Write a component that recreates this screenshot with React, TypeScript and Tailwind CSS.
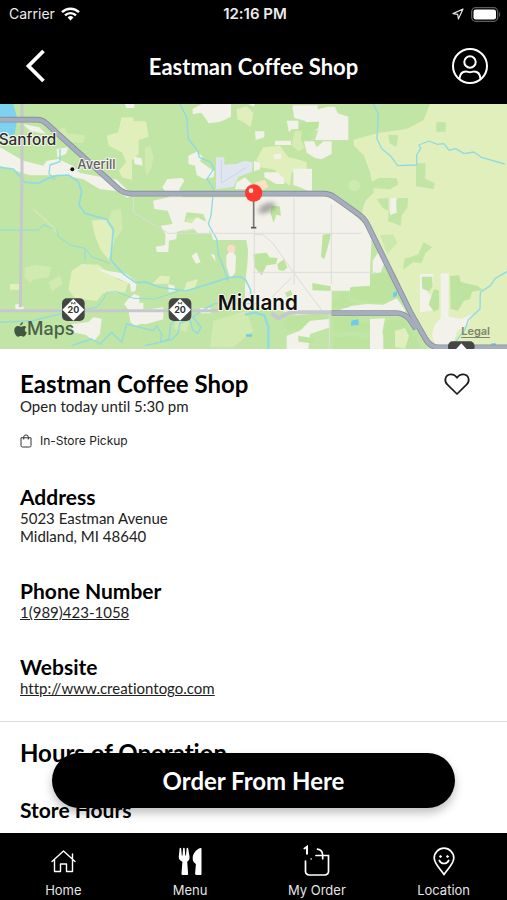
import type { ReactNode } from 'react';

const NAV_ITEMS: { label: string; icon: ReactNode }[] = [
  { label: 'Home', icon: <HomeIcon /> },
  { label: 'Menu', icon: <MenuIcon /> },
  { label: 'My Order', icon: <OrderIcon /> },
  { label: 'Location', icon: <LocationIcon /> },
];

function HomeIcon() {
  return (
    <svg width="30" height="32" viewBox="0 0 30 32" fill="none" stroke="#fff" strokeWidth="1.4" strokeLinejoin="round" strokeLinecap="round">
      <path d="M4 16.500 15.500 6l11.500 10.500M6.500 14.500V26.500h6v-7.500h6v7.500h6V14.500M24.500 13.500V9" />
    </svg>
  );
}

function MenuIcon() {
  return (
    <svg width="30" height="32" viewBox="0 0 30 32" fill="#fff">
      <path d="M4.600 3.500c.1-.9 1.500-.9 1.600 0l.6 7h.7l.6-7c.1-.9 1.500-.9 1.600 0l.6 7h.7l.6-7c.1-.9 1.500-.9 1.600 0l1.300 8c.3 2.600-.6 4.300-2.300 5.200l.9 11.800c.1 1-.6 1.500-1.500 1.500H8c-.9 0-1.600-.5-1.500-1.500l.9-11.800c-2.300-.9-3.900-2.600-3.600-5.200z" />
      <path d="M26.500 3.700v25c0 .9-.4 1.300-1.300 1.300h-3.800c-.9 0-1.400-.5-1.300-1.400l.8-9.600c-2.500-1.400-3.500-3.600-3.200-6.400.4-4 3-7.800 7.500-9.500.8-.2 1.300 0 1.300.6z" />
    </svg>
  );
}

function OrderIcon() {
  return (
    <svg width="30" height="32" viewBox="0 0 30 32" fill="none" stroke="#fff" strokeWidth="1.700" strokeLinecap="round">
      <path d="M3.500 16v10.500a3.500 3.500 0 0 0 3.500 3.500h16a3.500 3.500 0 0 0 3.500-3.500v-16H14" />
      <path d="M15.500 4.200c3 .3 5 2.600 5.200 6v3.500" />
      <path d="M2.500 3.500 5 1.800v7" strokeWidth="2" />
      <circle cx="9" cy="14" r=".4" strokeWidth=".6" />
    </svg>
  );
}

function LocationIcon() {
  return (
    <svg width="30" height="32" viewBox="0 0 30 32" fill="none" stroke="#fff" strokeWidth="1.700" strokeLinecap="round" strokeLinejoin="round">
      <path d="M15 29.500C11.500 24 5.200 18.800 5.200 13a9.800 9.800 0 0 1 19.600 0c0 5.800-6.300 11-9.800 16.500z" />
      <path d="M10.300 15.500c2 4 7.400 4 9.400 0" />
      <circle cx="11.500" cy="11.500" r=".9" fill="#fff" strokeWidth="1" />
      <circle cx="18.500" cy="11.500" r=".9" fill="#fff" strokeWidth="1" />
    </svg>
  );
}

function StatusBar() {
  return (
    <div className="grid grid-cols-3 items-center h-7 pl-[9px] pr-1.5 text-sm text-[#ececec] font-['Inter',sans-serif]">
      <div className="flex items-center gap-1.5">
        <span>Carrier</span>
        <svg width="19" height="14" viewBox="0 0 19 14" fill="none" stroke="#fff" strokeWidth="2.400">
          <path d="M1 5.200a12.200 12.200 0 0 1 17 0M4 8.300a8 8 0 0 1 11 0" />
          <path d="M9.500 13.500 6.600 10.500a4.200 4.200 0 0 1 5.800 0z" fill="#fff" stroke="none" />
        </svg>
      </div>
      <span className="text-center text-[15px] font-semibold">12:16 PM</span>
      <div className="flex items-center justify-end gap-[7px]">
        <svg width="12" height="12" viewBox="0 0 12 12" fill="none" stroke="#e5e5e5" strokeWidth="1.200" strokeLinejoin="round">
          <path d="M11 1 1 5.600l4.700.7.7 4.700z" />
        </svg>
        <svg width="30" height="15" viewBox="0 0 30 15">
          <rect x=".7" y=".7" width="26" height="13.600" rx="4" fill="#000" stroke="#5c5c5c" strokeWidth="1.300" />
          <rect x="2.500" y="2.500" width="22.500" height="10" rx="2.200" fill="#fff" />
          <path d="M28 5c1.600.6 1.600 4.400 0 5z" fill="#5c5c5c" />
        </svg>
      </div>
    </div>
  );
}

function RouteShield({ x, y }: { x: number; y: number }) {
  return (
    <g transform={`translate(${x} ${y})`}>
      <rect x="-34" y="-34" width="68" height="68" rx="15" fill="#454545" />
      <path d="M0-33 33 0 0 33-33 0z" fill="#fff" />
      <path d="M-5-16v-6l5 4 5-4v6" fill="none" stroke="#333" strokeWidth="2.500" />
      <text y="11" textAnchor="middle" fontSize="27" fontWeight="700" fill="#333">20</text>
    </g>
  );
}

function StoreMap() {
  return (
    <section aria-label="Map" className="relative h-[245px] shrink-0 overflow-hidden bg-[#c1e5a5] font-['Inter',sans-serif]">
      <svg className="w-full h-full" viewBox="0 0 1521 735" preserveAspectRatio="xMidYMid slice">
        <defs>
          <filter id="pinShadow" x="-50%" y="-50%" width="200%" height="200%">
            <feGaussianBlur stdDeviation="8" />
          </filter>
        </defs>
        <rect width="1521" height="735" fill="#c1e5a5" />

        {/* farmland */}
        <g fill="#e0efbc">
          <path d="M1290 0h231v735h-235l-60-110-40-105-60-120-45-60 15-50 26-25-12-60-18-50-30-30-2-18 75-20 85-12 50-26z" />
          <path d="M365 40h35v12h38l8 46-30 10v42l-20 18v60l-30-8-10-20 22-25-12-30-40-20-6-30 34-10z" />
          <path d="M275 350l45-5 25 25-2 40-16 58-25-30-18-45z" />
          <path d="M215 500l30-20 50 2 60 45 30 10-10 28-65 3-20 23-65-8-20-25z" />
          <path d="M480 515l30 2-4 22-50 2zM560 535l35-10-12 30-32 8zM30 540h30v17H30z" />
          <path d="M770 165l20-35 50-5 25 35 25 5 30 10v20l-45 10-5 40-25-18-20-30-50-8zM710 15l30-8 20 20-8 42-22-15-18-8z" />
          <path d="M0 45" />
        </g>
        <g fill="#d0eab0">
          <path d="M435 130l16-5 10 35-8 35-14 20-5-30z" />
          <path d="M75 490l35-8 45 8-10 30-40 5-15 12-17-18zM145 535l35-20 8 25-32 22z" />
          <path d="M335 320l28-5 5 60-20 30-25-48zM165 80l30-12 5 20 55 5-5 25-50-5-30-10z" />
          <path d="M560 345l40-6-15 40-35 5zM640 650l100-30 20 60-60 50h-70zM520 640l50 5-10 40-35-10z" />
        </g>

        {/* woods on top of the farmland */}
        <g fill="#c1e5a5">
          <path d="M1309 55h28v28h-28zM1165 92l30 2-6 35-20-12zM1248 178h28v46l28 14-3 17-53-8zM1110 0h175l-25 25-50 24-100 8z" />
          <path d="M1110 235l30-14 50 2 5 18-25 15-60-4zM1130 285l35-3 1 45 28-45h30l-2 30-17 22-3 32-38-15 3-30-18-8z" />
          <path d="M1213 465l42-14 16-36 25 15-20 18-12 30-25-3-30 22z" />
          <path d="M1140 393l40-2 12 25-30 35z" fill="#cbe9ac" />
        </g>

        {/* built-up ground */}
        <g fill="#f2f1ea">
          <path d="M505 280h280v-8h185l65 35 60 55 20 35-5 108v40l-52 3v12H995v68l-90 10-60-18-110-12v-60l8-80 2-60H640L610 330l-50-5-7 28 22 5 15-18 38 18v32l-35-2-12-15-50 10-2 22-22 5-2 34h-35l-3-16 28-5 2-30-15-28 36-5-15-40-40-5-4-25z" />
          <path d="M487 250l15-25 45-3 6 8-15 25 10 25h-40zM1118 470l20-30 14 40-10 25-24 4zM1040 608l60-8 50 2 40-20 25 35v10h-210z" />
          <path d="M68 60l50 10 20 20-48-10zM0 130l70 40 60 15 10-15 35-5 45 22 20 20 110 20 30 28 20 18-18 8-32-20-50-5-50-30-60-12H90l-90-28z" />
          <path d="M170 135l36-5-8 20-26 10zM578 15l27-15h88v38l-32 15-35 5-22-32-26 5zM375 0h28v12h-24z" />
          <path d="M400 158l25 5 3 22-24-5zM565 155l25-12 18 14-8 15 25 18 18 12-3 18-28 5-22-12-5-28-20-5z" />
          <path d="M679 455l15-20 14 22-2 48-15 20-12-40zM575 455l15-10 12 30-14 4zM632 450l12 2 3 22zM736 390l24-5v60l-15-2z" />
          <path d="M372 600l10-12 20-18 16 6v20h12v20h18l42-6v36l-50 14h-20l-12 6-16-10-8-40zM600 612h32v16h-32zM45 602l14-4 14 14-10 10-16-4z" />
          <path d="M215 660l50-6 15-15 25 5-5 45-18 22-24-18-40-8z" />
          <path d="M505 540l18 5 3 15-20 5zM290 495l90 15 30 25-3 25-14 4-3-25z" />
          <path d="M765 82h28v18l-26 8zM825 110h48v13h-48zM860 50h35v25h-20l-8 10zM878 4h75v12l30-8h22l8 20 32 10v70h-100l10-30-22 2-18-30-32-8-5-28zM912 112h30l8 18 20-18h25v38l-30 16-20-4-25-16z" />
          <path d="M880 194h56v66h-12l-44-18zM793 205h40l20 20v15h-25l-35-20zM762 170l18 6v20l-18 6zM710 235l25-15 20 20v15h-50zM820 152l24-4v16l-20 2zM745 0h20l-4 8z" />
          <path d="M1172 283l16-2 2 45-20 7z" />
          <path d="M1260 510h40v25h-18v30l18 15-2 40-38 5zM1322 508h24v130l40 6 30-14-10 30-35 22-15 50h-50l-10-40 8-30 18-20z" />
          <path d="M1110 645l45-2-8 42 12 50h-49zM930 650l60-5v25l-60 20-5 45h-65v-40l40-15z" />
        </g>

        {/* parks inside town */}
        <g fill="#bde49f">
          <path d="M760 450l40-4 8 14 25 2-5 18-28 4-15 30-22-25zM832 480l20-14 10 25-12 10-15-4zM815 305l24 2 4 28-14-3-8 24-10-30zM968 392l25-4-6 28-14 50-10-8z" />
          <path d="M937 537l55 10v14l-55-2zM998 585l20-5 8-18 22 4-7 20 28 12-30 14h-44zM1110 510l75-3 15 35 5 35-50 20h-40l-65-15v-32l60-2z" />
          <path d="M855 566l18-8 4 14-16 8zM862 640l40-8 80-5 5 15-60 8-22 24-40 6-18-15zM1000 640l70-5 10 20 30 5v20l-50 5-60-3zM1000 700l60-3 50 8v30h-110zM895 695l48 8-8 15-40-5z" />
          <path d="M1160 650l50-5 40 60 10 30h-110v-45z" />
          <path d="M1265 518h32v32l-10 12-20-8zM1302 555l15 5v55l-15 8-16-22z" />
          <path d="M1350 516l28-2 4 20 50 12 18 12-34 5-6 22-18 5-18 30-22-5z" />
          <path d="M895 75l10-20 52-2-2 20-30 15 8 20-38 5z" />
        </g>
        <path d="M1185 680l30-8 12 24-12 38-30-5z" fill="#e0efbc" />
        <path d="M885 80l20 2-2 24 10 25-18 12-20-20z" fill="#d6ecb4" />
        <circle cx="1063" cy="245" r="17" fill="#cdebb0" />
        <path d="M648 160h25v22l35-2 25-10 25 5-2 28-40 15-16 30-52 8z" fill="#dfe6f0" />
        <path d="M664 235v-65M664 238l75-48" stroke="#ccd5e4" strokeWidth="3" />
        <path d="M765 235l30-8 10 22-30 16z" fill="#fae3c5" />
        <circle cx="694" cy="434" r="12" fill="#fbdccb" />

        {/* rivers and ponds */}
        <path d="M0 0h40l12 45-8 45-44 12z" fill="#7dd2ef" />
        <g fill="none" stroke="#8edbe2" strokeWidth="4" strokeLinejoin="round">
          <path d="M0 190l40 5 35 40 40 3 30-15 25-8 35-2 30 20 10 30-8 40 18 25 65 18 20 30-8 90 20 25 20 20 35 25 30-2 40 15 80 12 50-15 80-25 35-3 15 10 15 30v35" strokeWidth="5" />
          <path d="M180 135v38l-30 10-3 25 18 20M540 0l20 40 5 65 28 35 5 20 35 15 8 20-20 30 20 30-8 80-8 25 25 45 5 45 15 40 15 40" />
          <path d="M0 378h115l15-15 40 15 5 20 35 25 45 10 20 25 55 20" strokeWidth="3" />
          <path d="M255 435v35M190 625l100-15 20-25 10-20 30-2 50 20 65 2 70-23" strokeWidth="3" />
          <path d="M0 655l100-5 60-15 55-12M215 725l60-20 25 15 35-35 30 30 15-55 80 20 10-15 15 25-3 25 25-10 5-45 25-15-2-18M435 725l80-18 20-20 5-30 30-10 8 30 15 12 10-20-25-30 30-20 35-20h130" />
          <path d="M1120 0l15 30-4 75 15 30 25 20 22 30 57-2v-30l12-20-5-10 30-12 25 10 20-2 15 20 20-5 25 15 30-5 22 16 70 20" />
          <path d="M1521 503l-35 20-15 22-30 20-1 50-35 32-10 30-28 35" />
          <path d="M735 632l30-6 28 8 12 35v66" strokeWidth="7" />
        </g>
        <path d="M1054 650l21-4 2 17-24 2zM1179 566l12-4v14l-12 4zM738 691h18v7h-18zM1474 718h14v10h-14z" fill="#6fcbed" />

        {/* minor roads */}
        <g fill="none" stroke="#dddcda" strokeWidth="3">
          <path d="M882 282v260M994 300v240M505 388h580M759 505h370M763 392h25l30 25 60 85 92 123M815 580l60-60M400 275v50l105 63M763 372v238M988 630v104" />
          <path d="M100 315l60 55 10 18" stroke="#d9e6b0" strokeWidth="5" />
        </g>
        <g fill="none" stroke="#c5c8cc" strokeWidth="9">
          <path d="M66 0v200l-5 410" />
          <path d="M0 620h655" />
          <path d="M815 628l20 15 35-18h130" strokeWidth="12" />
        </g>

        {/* highway, casing first */}
        <g fill="none" stroke="#8990a0" strokeWidth="17" strokeLinejoin="round">
          <path d="M0 47h110q18 0 30 12l215 195q18 15 40 15h575q20 0 33 10l70 50q22 14 32 38l125 255 45 80q15 28 40 28h206" />
          <path d="M995 627h195q20 0 38 18l20 30" />
        </g>
        <g fill="none" stroke="#a6adbc" strokeWidth="12" strokeLinejoin="round">
          <path d="M0 47h110q18 0 30 12l215 195q18 15 40 15h575q20 0 33 10l70 50q22 14 32 38l125 255 45 80q15 28 40 28h206" />
          <path d="M995 627h195q20 0 38 18l20 30" />
        </g>

        <RouteShield x={220} y={617} />
        <RouteShield x={540} y={617} />
        <rect x="1344" y="712" width="80" height="30" rx="14" fill="#454545" />
        <path d="M1364 740l20-22 20 22z" fill="#fff" />

        {/* place names */}
        <g stroke="#f6f7ee" strokeWidth="6" strokeLinejoin="round" paintOrder="stroke">
          <text x="-4" y="124" fontSize="46" fontWeight="500" fill="#2d2f2c">Sanford</text>
          <text x="232" y="195" fontSize="39" fontWeight="500" fill="#5d605b">Averill</text>
          <text x="653" y="617" fontSize="62" fontWeight="600" fill="#111">Midland</text>
        </g>
        <circle cx="217" cy="196" r="6" fill="#111" />

        {/* pin */}
        <ellipse cx="800" cy="312" rx="28" ry="13" fill="#555" opacity=".5" filter="url(#pinShadow)" transform="rotate(-25 800 312)" />
        <path d="M761 290v80" stroke="#777" strokeWidth="5" />
        <path d="M753 371h16" stroke="#555" strokeWidth="5" />
        <circle cx="761" cy="267" r="26" fill="#fc3a30" />
        <circle cx="753" cy="260" r="7" fill="#fff" opacity=".9" />
      </svg>

      <div className="absolute left-3.5 bottom-2.5 flex items-center text-lg leading-5 font-medium text-[#49604a]">
        <svg width="13" height="15" viewBox="0 0 13 15" fill="#405741">
          <path d="M9 0c.1 1.700-1.200 3.300-2.800 3.400C6 1.800 7.500.2 9 0zM12.300 5.200c-2.200 1.400-1.800 4.300.5 5.300-.6 1.700-1.900 4.200-3.300 4.200-1 0-1.400-.6-2.600-.6s-1.600.6-2.600.6C2.400 14.700.3 11.300.3 8.400c0-2.800 1.700-4.400 3.600-4.400 1.200 0 2.100.7 2.900.7.700 0 1.800-.8 3.200-.8.900 0 1.800.5 2.300 1.300z" />
        </svg>
        <span>Maps</span>
      </div>
      <a href="#legal" className="absolute right-[17px] bottom-2.5 text-[11px] leading-4 font-semibold text-[#7d8570] underline underline-offset-2">
        Legal
      </a>
    </section>
  );
}

export default function App() {
  return (
    <div className="flex flex-col h-screen bg-white text-black font-['Lato',sans-serif] [font-variant-ligatures:none]">
      <header className="shrink-0 bg-black text-white">
        <StatusBar />
        <div className="grid grid-cols-[60px_1fr_60px] items-center h-[76px] px-[18px]">
          <button type="button" aria-label="Back" className="justify-self-start pl-1.5">
            <svg width="24" height="34" viewBox="0 0 24 34" fill="none" stroke="#fff" strokeWidth="3.800">
              <path d="M19.500 2 4.500 17l15 15" />
            </svg>
          </button>
          <h1 className="text-center text-[22px] font-bold">Eastman Coffee Shop</h1>
          <button type="button" aria-label="Account" className="justify-self-end">
            <svg width="38" height="38" viewBox="0 0 38 38" fill="none" stroke="#fff" strokeWidth="2">
              <circle cx="19" cy="19" r="17" />
              <circle cx="19" cy="15" r="5.700" />
              <path d="M8.500 32c.3-5 2.700-7.500 6.500-7.500 1.500 0 2.500.8 4 .8s2.500-.8 4-.8c3.800 0 6.200 2.500 6.500 7.500" />
            </svg>
          </button>
        </div>
      </header>

      <div className="relative flex-1 min-h-0">
        <main className="h-full overflow-y-auto">
          <StoreMap />

          <div className="px-5 pt-[22px] pb-6 border-b border-[#dcdcdc]">
            <div className="flex justify-between items-start">
              <div>
                <h2 className="text-2xl leading-[26px] font-bold">Eastman Coffee Shop</h2>
                <p className="text-[15px] leading-[18px] text-[#222]">Open today until 5:30 pm</p>
              </div>
              <button type="button" aria-label="Favorite" className="mr-4">
                <svg width="28" height="26" viewBox="0 0 28 26" fill="none" stroke="#1c1c1c" strokeWidth="1.700" strokeLinejoin="round">
                  <path d="M14 23 4.200 13.400C.8 10 2 3.800 7.600 3.300c2.700-.1 5 1.200 6.400 3.500 1.400-2.300 3.700-3.600 6.400-3.500 5.600.5 6.800 6.700 3.400 10.100z" />
                </svg>
              </button>
            </div>
            <p className="flex items-center gap-2 mt-[17px] text-xs leading-[18px] text-[#222] font-['Inter',sans-serif]">
              <svg width="12" height="14" viewBox="0 0 12 14" fill="none" stroke="#333" strokeWidth="1">
                <path d="M1 3.800h10v7.700q0 1.500-1.500 1.500h-7Q1 13 1 11.500zM3.700 5.500V3.200a2.300 2.300 0 0 1 4.600 0v2.300" />
              </svg>
              In-Store Pickup
            </p>

            <div className="flex flex-col gap-[34px] mt-[35px] text-[15px] leading-[18px] text-[#222]">
              <section>
                <h3 className="text-[21px] leading-6 font-bold text-black">Address</h3>
                <p>5023 Eastman Avenue<br />Midland, MI 48640</p>
              </section>
              <section>
                <h3 className="text-[21px] leading-6 font-bold text-black">Phone Number</h3>
                <a href="tel:19894231058" className="block underline">1(989)423-1058</a>
              </section>
              <section>
                <h3 className="text-[21px] leading-6 font-bold text-black">Website</h3>
                <a href="http://www.creationtogo.com" className="block underline">http://www.creationtogo.com</a>
              </section>
            </div>
          </div>

          <section className="px-5 pt-[18px]">
            <h2 className="text-2xl leading-[26px] font-bold">Hours of Operation</h2>
            <h3 className="mt-8 text-[21px] leading-6 font-bold">Store Hours</h3>
          </section>
        </main>

        <button
          type="button"
          className="absolute inset-x-[52px] bottom-[25px] h-[55px] rounded-full bg-black text-white text-2xl font-bold shadow-[0_5px_10px_rgba(0,0,0,0.25)]"
        >
          Order From Here
        </button>
      </div>

      <nav className="grid grid-cols-4 shrink-0 pt-3 pb-0.5 bg-black text-[#e4e4e4] font-['Inter',sans-serif]">
        {NAV_ITEMS.map((item) => (
          <a key={item.label} href="#" className="flex flex-col items-center gap-[5px] text-[13px] leading-4">
            {item.icon}
            <span>{item.label}</span>
          </a>
        ))}
      </nav>
    </div>
  );
}
